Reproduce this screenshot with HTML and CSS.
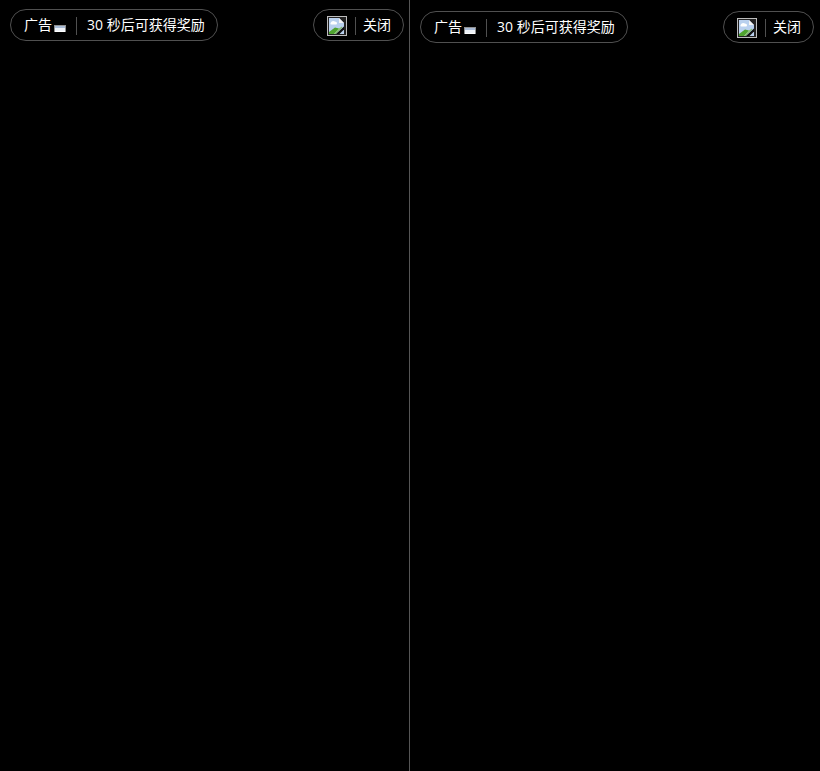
FILE: index.html
```html
<!DOCTYPE html>
<html lang="zh-CN">
<head>
  <meta charset="UTF-8">
  <title>广告</title>
  <link rel="stylesheet" href="styles.css">
</head>
<body>
  <div class="screens">
    <!-- Left ad screen -->
    <section class="screen screen-left">
      <div class="ad-bar">
        <div class="pill pill-info">
          <span class="label">广告</span>
          <svg class="tag-icon" viewBox="0 0 12 7" width="12" height="7">
            <rect x="0" y="0" width="12" height="7" fill="#8f8f8f"/>
            <rect x="1" y="1" width="10" height="2" fill="#a9bbd6"/>
            <rect x="1" y="3" width="10" height="3" fill="#eef2f8"/>
            <rect x="1" y="6" width="10" height="1" fill="#ffffff"/>
          </svg>
          <span class="sep"></span>
          <span class="label">30 秒后可获得奖励</span>
        </div>
        <div class="pill pill-close">
          <svg class="broken-img" viewBox="0 0 20 20" width="20" height="20">
            <rect x="0.5" y="0.5" width="19" height="19" fill="#222" stroke="#bdbdbd"/>
            <path d="M2 2H12L17 7V18H2Z" fill="#b9d0ee"/>
            <path d="M12 2L17 7H12Z" fill="#f4f4f4"/>
            <path d="M3.5 7Q5 4 8 5.5Q11 6 9.5 8.5H4.5Q3 8.500 3.500 7Z" fill="#fff"/>
            <path d="M2 16L8 11.500L12 12.500L7 18H2Z" fill="#4fa32f"/>
            <path d="M12 12.500L15 10.500V11.500L9 18H7Z" fill="#86c266"/>
            <path d="M9 18L17 10.500V13.500L12.500 18Z" fill="#111"/>
          </svg>
          <span class="sep"></span>
          <span class="label">关闭</span>
        </div>
      </div>
    </section>
    <!-- Right ad screen -->
    <section class="screen screen-right">
      <div class="ad-bar">
        <div class="pill pill-info">
          <span class="label">广告</span>
          <svg class="tag-icon" viewBox="0 0 12 7" width="12" height="7">
            <rect x="0" y="0" width="12" height="7" fill="#8f8f8f"/>
            <rect x="1" y="1" width="10" height="2" fill="#a9bbd6"/>
            <rect x="1" y="3" width="10" height="3" fill="#eef2f8"/>
            <rect x="1" y="6" width="10" height="1" fill="#ffffff"/>
          </svg>
          <span class="sep"></span>
          <span class="label">30 秒后可获得奖励</span>
        </div>
        <div class="pill pill-close">
          <svg class="broken-img" viewBox="0 0 20 20" width="20" height="20">
            <rect x="0.5" y="0.5" width="19" height="19" fill="#222" stroke="#bdbdbd"/>
            <path d="M2 2H12L17 7V18H2Z" fill="#b9d0ee"/>
            <path d="M12 2L17 7H12Z" fill="#f4f4f4"/>
            <path d="M3.5 7Q5 4 8 5.5Q11 6 9.5 8.5H4.5Q3 8.500 3.500 7Z" fill="#fff"/>
            <path d="M2 16L8 11.500L12 12.500L7 18H2Z" fill="#4fa32f"/>
            <path d="M12 12.500L15 10.500V11.500L9 18H7Z" fill="#86c266"/>
            <path d="M9 18L17 10.500V13.500L12.500 18Z" fill="#111"/>
          </svg>
          <span class="sep"></span>
          <span class="label">关闭</span>
        </div>
      </div>
    </section>
  </div>
</body>
</html>
```

FILE: styles.css
```css
html, body {
  height: 100%;
}

body {
  margin: 0;
  background-color: #000;
  color: #fff;
  font-family: "Open Sans", "Noto Sans CJK SC", sans-serif;
  font-size: 14px;
  overflow: hidden;
}

.screens {
  display: flex;
  height: 771px;
}

.screen {
  box-sizing: border-box;
}

.screen-left {
  width: 410px;
  padding: 9px 5px 0 10px;
  border-right: 1px solid #555;
}

.screen-right {
  width: 410px;
  padding: 11px 6px 0 10px;
}

.ad-bar {
  display: flex;
  justify-content: space-between;
}

.pill {
  display: flex;
  align-items: center;
  box-sizing: border-box;
  height: 32px;
  padding-top: 2px;
  border: 1px solid #505050;
  border-radius: 16px;
}

.pill-info {
  width: 208px;
  padding-left: 13px;
}

.pill-close {
  width: 91px;
  padding-left: 13px;
}

.label {
  margin-bottom: 2px;
  line-height: 20px;
  white-space: nowrap;
}

.tag-icon {
  margin: 5px 0 0 2px;
}

.sep {
  width: 1px;
  height: 18px;
  margin: 0 10px;
  background-color: #505050;
}

.pill-close .sep {
  margin: 0 7px 0 8px;
}
```
